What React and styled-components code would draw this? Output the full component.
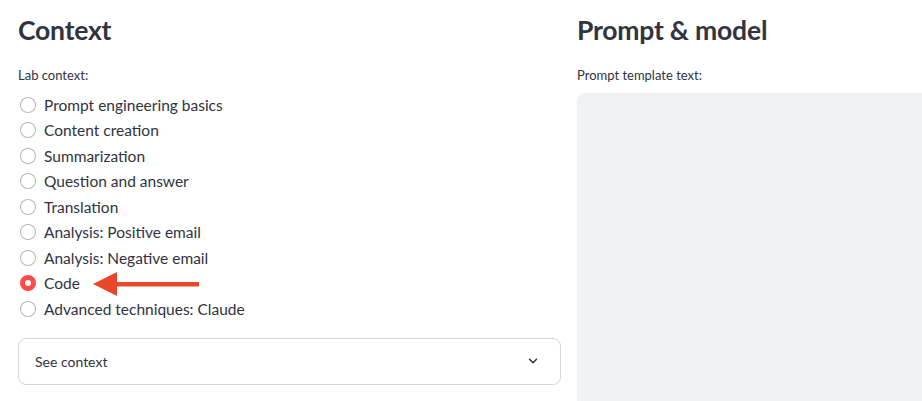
import styled, { createGlobalStyle } from "styled-components";
import { useState } from "react";

const GlobalStyle = createGlobalStyle`
  body {
    margin: 0;
    background: #fff;
    font-family: "Lato", "Liberation Sans", sans-serif;
    color: rgb(49, 51, 63);
  }
`;

const contexts = [
  "Prompt engineering basics",
  "Content creation",
  "Summarization",
  "Question and answer",
  "Translation",
  "Analysis: Positive email",
  "Analysis: Negative email",
  "Code",
  "Advanced techniques: Claude",
];

export default function App() {
  const [selected, setSelected] = useState("Code");

  return (
    <>
      <GlobalStyle />
      <Page>
        <Column>
          <Heading>Context</Heading>
          <Label>Lab context:</Label>
          <RadioList>
            {contexts.map((c) => (
              <RadioRow key={c} onClick={() => setSelected(c)}>
                <Dot checked={c === selected} />
                <span>{c}</span>
                {c === "Code" && (
                  <Arrow width="106" height="26" viewBox="0 0 106 26">
                    <polygon points="0,13 24,1 24,25" fill="#e8482a" />
                    <rect x="22" y="11" width="84" height="4.5" fill="#e8482a" />
                  </Arrow>
                )}
              </RadioRow>
            ))}
          </RadioList>
          <Expander>
            <span>See context</span>
            <svg width="14" height="14" viewBox="0 0 24 24" fill="none" stroke="rgb(49,51,63)" strokeWidth="2.6" strokeLinecap="round" strokeLinejoin="round">
              <polyline points="6 9 12 15 18 9" />
            </svg>
          </Expander>
        </Column>
        <Column>
          <Heading>Prompt &amp; model</Heading>
          <Label>Prompt template text:</Label>
          <TextArea />
        </Column>
      </Page>
    </>
  );
}

const Page = styled.div`
  display: grid;
  grid-template-columns: 543px 1fr;
  column-gap: 16px;
  padding: 0 0 0 18px;
  height: 401px;
  overflow: hidden;
`;

const Column = styled.div`
  display: flex;
  flex-direction: column;
`;

const Heading = styled.h2`
  margin: 0;
  padding: 12px 0 0;
  font-size: 26.5px;
  font-weight: 700;
  line-height: 36px;
  letter-spacing: -0.2px;
`;

const Label = styled.div`
  margin-top: 18px;
  font-size: 13px;
  line-height: 18px;
  height: 18px;
`;

const RadioList = styled.div`
  display: flex;
  flex-direction: column;
  margin-top: 8px;
`;

const RadioRow = styled.label`
  position: relative;
  display: flex;
  align-items: center;
  gap: 8px;
  height: 25.5px;
  font-size: 15.5px;
  cursor: pointer;
  padding-left: 2px;
`;

const Dot = styled.span`
  width: 16px;
  height: 16px;
  box-sizing: border-box;
  border-radius: 50%;
  flex-shrink: 0;
  border: ${(p) => (p.checked ? "5px solid rgb(255, 75, 75)" : "1px solid rgba(49, 51, 63, 0.35)")};
  background: #fff;
`;

const Arrow = styled.svg`
  position: absolute;
  left: 75px;
  top: 0;
`;

const Expander = styled.div`
  margin-top: 16px;
  height: 47px;
  box-sizing: border-box;
  border: 1px solid rgba(49, 51, 63, 0.2);
  border-radius: 8px;
  display: flex;
  align-items: center;
  justify-content: space-between;
  padding: 0 20px 0 16px;
  font-size: 14px;
`;

const TextArea = styled.div`
  margin-top: 9px;
  flex: 1;
  background: rgb(240, 242, 246);
  border-radius: 8px 0 0 0;
`;
